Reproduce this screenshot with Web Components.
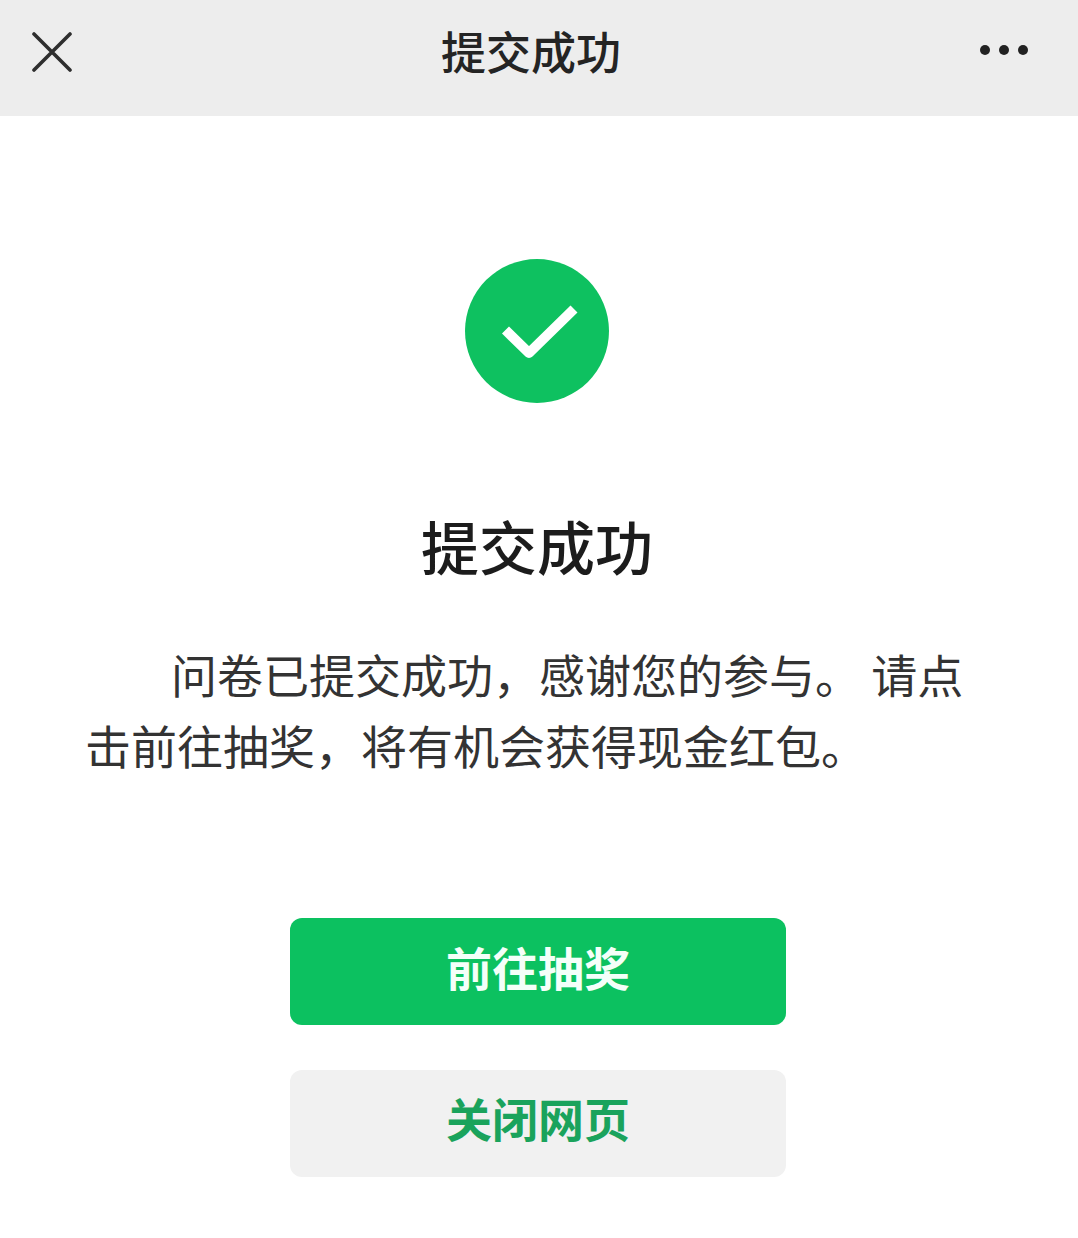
<!DOCTYPE html>
<html lang="zh">
<head>
<meta charset="utf-8">
<title>提交成功</title>
<style>
  html, body { margin: 0; background: #fff; }
  body { font-family: "Noto Sans CJK SC", "Liberation Sans", sans-serif; }
</style>
</head>
<body>
<nav-bar>提交成功</nav-bar>
<result-page>
  <span slot="title">提交成功</span>
  <span slot="text">问卷已提交成功，感谢您的参与。 请点击前往抽奖，将有机会获得现金红包。</span>
  <action-button kind="primary">前往抽奖</action-button>
  <action-button>关闭网页</action-button>
</result-page>
<script>
class NavBar extends HTMLElement {
    constructor() {
        super();
        this.attachShadow({ mode: 'open' });
        this.shadowRoot.innerHTML = `
            <style>
                :host { display: block; }
                .bar {
                    display: grid;
                    grid-template-columns: 104px 1fr 104px;
                    align-items: center;
                    height: 116px;
                    background: #ededed;
                    color: #242424;
                }
                .title {
                    font-size: 45px;
                    line-height: 1;
                    font-weight: 500;
                    text-align: center;
                    padding: 0 16px 16px 0;
                }
                svg { display: block; }
                .close { margin: 0 0 12px 32px; }
                .more { margin: 0 0 16px 5px; }
            </style>
            <div class="bar">
                <svg class="close" width="40" height="40" viewBox="0 0 40 40" fill="none" stroke="#2e2e2e" stroke-width="3.6" stroke-linecap="round">
                    <path d="M2 2 38 38M38 2 2 38"/>
                </svg>
                <div class="title"><slot></slot></div>
                <svg class="more" width="50" height="12" viewBox="0 0 50 12" fill="#222">
                    <circle cx="6" cy="6" r="5"/><circle cx="25" cy="6" r="5"/><circle cx="44" cy="6" r="5"/>
                </svg>
            </div>
        `;
    }
}

class ResultPage extends HTMLElement {
    constructor() {
        super();
        this.attachShadow({ mode: 'open' });
        this.shadowRoot.innerHTML = `
            <style>
                :host { display: block; }
                .wrap {
                    display: flex;
                    flex-direction: column;
                    align-items: center;
                    padding: 143px 4px 60px 0;
                }
                .icon { display: block; }
                h1 {
                    margin: 99px 0 0;
                    font-size: 58px;
                    line-height: 86px;
                    font-weight: 500;
                    color: #1c1c1c;
                }
                p {
                    width: 904px;
                    margin: 50px 0 0;
                    font-size: 46px;
                    line-height: 71px;
                    color: #333;
                    text-indent: 86px;
                }
                .actions {
                    display: flex;
                    flex-direction: column;
                    gap: 45px;
                    width: 496px;
                    margin: 138px 0 0 2px;
                }
            </style>
            <div class="wrap">
                <svg class="icon" width="144" height="144" viewBox="0 0 144 144">
                    <circle cx="72" cy="72" r="72" fill="#0ec160"/>
                    <path d="M40.5 71 64 94 109 50" fill="none" stroke="#fff" stroke-width="10" stroke-linejoin="round"/>
                </svg>
                <h1><slot name="title"></slot></h1>
                <p><slot name="text"></slot></p>
                <div class="actions"><slot></slot></div>
            </div>
        `;
    }
}

class ActionButton extends HTMLElement {
    constructor() {
        super();
        this.attachShadow({ mode: 'open' });
        this.shadowRoot.innerHTML = `
            <style>
                :host { display: block; }
                .btn {
                    display: flex;
                    align-items: center;
                    justify-content: center;
                    height: 107px;
                    border-radius: 12px;
                    font-size: 46px;
                    line-height: 1;
                    font-weight: 700;
                    background: #f1f1f1;
                    color: #1aa35c;
                    padding-bottom: 14px;
                    box-sizing: border-box;
                }
                :host([kind="primary"]) .btn { background: #0cc160; color: #f4fff9; padding-bottom: 12px; }
            </style>
            <div class="btn"><slot></slot></div>
        `;
    }
}

customElements.define('nav-bar', NavBar);
customElements.define('result-page', ResultPage);
customElements.define('action-button', ActionButton);
</script>
</body>
</html>
